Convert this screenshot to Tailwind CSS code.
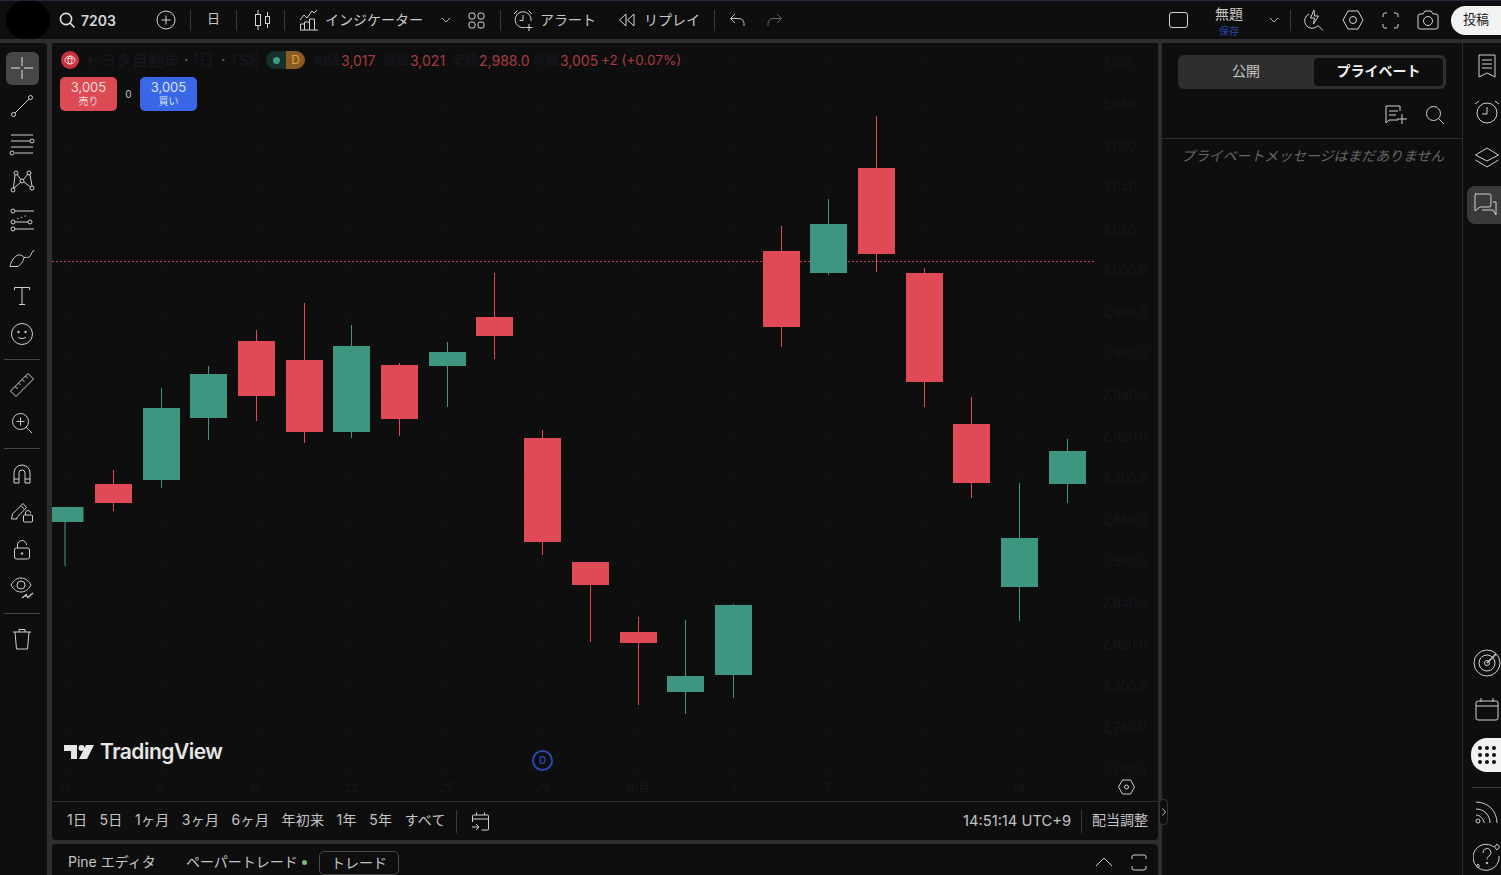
<!DOCTYPE html>
<html lang="ja">
<head>
  <meta charset="UTF-8" />
  <title>TradingView 7203</title>
  <script src="https://cdn.jsdelivr.net/npm/@tailwindcss/browser@4"></script>
</head>
<body class="bg-[#2e2e2e] text-[#d4d4d4] overflow-hidden font-['Inter','Noto_Sans_CJK_JP',sans-serif]">
<div class="w-[1501px] h-[875px] flex flex-col overflow-hidden">

  <!-- Top bar -->
  <header class="h-[39px] shrink-0 bg-[#0e0e0f] border-t border-[#24263a] flex items-center text-[14px] text-[#c9c9c9]">
    <div class="w-[44px] h-[38px] ml-[6px] bg-black rounded-full"></div>
    <svg class="ml-[8px]" width="18" height="18" viewBox="0 0 18 18" fill="none" stroke="#e0e0e0" stroke-width="1.6"><circle cx="8" cy="8" r="5.6"/><path d="M12 12l4.5 4.5"/></svg>
    <span class="ml-[5px] w-[36px] font-semibold text-[#d8d8d8]">7203</span>
    <svg class="ml-[39px]" width="20" height="20" viewBox="0 0 20 20" fill="none" stroke="#d4d4d4"><circle cx="10" cy="10" r="9"/><path d="M10 5.500v9M5.500 10h9"/></svg>
    <div class="ml-[14px] w-px h-[21px] bg-[#3a3a3a]"></div>
    <span class="ml-[16px] w-[13px] text-[13px] pb-[2px]">日</span>
    <div class="ml-[16px] w-px h-[21px] bg-[#3a3a3a]"></div>
    <svg class="ml-[17px]" width="18" height="22" viewBox="0 0 18 22" fill="none" stroke="#d4d4d4"><rect x="1.500" y="5.500" width="5" height="11"/><path d="M4 1v4.500M4 16.500V21"/><rect x="11.500" y="7.500" width="4" height="7"/><path d="M13.500 3v4.500M13.500 14.500V19"/></svg>
    <div class="ml-[12px] w-px h-[21px] bg-[#3a3a3a]"></div>
    <svg class="ml-[14px]" width="20" height="22" viewBox="0 0 20 22" fill="none" stroke="#d4d4d4"><path d="M1 11l4-5 3 3 5-7 2 2 3-3"/><path d="M1.500 21v-6h4v6M5.500 21v-8h5v8M10.500 21v-11h5v11M1 21h18"/></svg>
    <span class="ml-[6px] w-[98px] whitespace-nowrap pb-[2px]">インジケーター</span>
    <svg class="ml-[18px]" width="10" height="6" viewBox="0 0 10 6" fill="none" stroke="#b8b8b8"><path d="M1 1l4 4 4-4"/></svg>
    <svg class="ml-[17px]" width="17" height="17" viewBox="0 0 17 17" fill="none" stroke="#d4d4d4"><rect x="1" y="1" width="6" height="6" rx="2"/><rect x="10" y="1" width="6" height="6" rx="2"/><rect x="1" y="10" width="6" height="6" rx="2"/><rect x="10" y="10" width="6" height="6" rx="2"/></svg>
    <div class="ml-[15px] w-px h-[21px] bg-[#3a3a3a]"></div>
    <svg class="ml-[12px]" width="21" height="22" viewBox="0 0 21 22" fill="none" stroke="#d4d4d4"><path d="M12 18.500A8 8 0 1 1 18 12M1 5l3.500-3.500M19 5l-3.500-3.500M10 6v5.500H6.500M16 15v7M12.500 18.500h7"/></svg>
    <span class="ml-[6px] w-[56px] whitespace-nowrap pb-[2px]">アラート</span>
    <svg class="ml-[22px]" width="18" height="14" viewBox="0 0 18 14" fill="none" stroke="#d4d4d4"><path d="M8 1L1.500 7 8 13zM16 1L9.500 7 16 13z"/></svg>
    <span class="ml-[8px] w-[55px] whitespace-nowrap pb-[2px]">リプレイ</span>
    <div class="ml-[15px] w-px h-[21px] bg-[#3a3a3a]"></div>
    <svg class="ml-[14px]" width="16" height="14" viewBox="0 0 16 14" fill="none" stroke="#c4c4c4"><path d="M6 1L1.500 5.500 6 10M1.500 5.500H10a5 5 0 0 1 5 5V13"/></svg>
    <svg class="ml-[22px]" width="16" height="14" viewBox="0 0 16 14" fill="none" stroke="#666"><path d="M10 1l4.500 4.500L10 10M14.500 5.500H6a5 5 0 0 0-5 5V13"/></svg>

    <div class="ml-auto flex items-center">
      <div class="w-[19px] h-[16px] border border-[#d4d4d4] rounded-[3px]"></div>
      <div class="ml-[27px] w-[28px] flex flex-col items-center leading-none">
        <span class="text-[14px] text-[#c9c9c9] whitespace-nowrap">無題</span>
        <span class="mt-[5px] -mb-[2px] text-[10px] text-[#2a4aa8] whitespace-nowrap">保存</span>
      </div>
      <svg class="ml-[26px]" width="10" height="6" viewBox="0 0 10 6" fill="none" stroke="#b8b8b8"><path d="M1 1l4 4 4-4"/></svg>
      <div class="ml-[11px] w-px h-[21px] bg-[#3a3a3a]"></div>
      <svg class="ml-[13px]" width="20" height="22" viewBox="0 0 20 22" fill="none" stroke="#d4d4d4"><path d="M5 5a7.500 7.500 0 1 0 9 11.500M14 16.500l5 5M10 1L6.500 9h4l-1 6 5-8h-4z"/></svg>
      <svg class="ml-[18px]" width="22" height="22" viewBox="0 0 22 22" fill="none" stroke="#d4d4d4"><path d="M6 2h10l5 9-5 9H6l-5-9z"/><circle cx="11" cy="11" r="3.500"/></svg>
      <svg class="ml-[18px]" width="17" height="17" viewBox="0 0 17 17" fill="none" stroke="#d4d4d4"><path d="M1 5V3a2 2 0 0 1 2-2h2M12 1h2a2 2 0 0 1 2 2v2M16 12v2a2 2 0 0 1-2 2h-2M5 16H3a2 2 0 0 1-2-2v-2"/></svg>
      <svg class="ml-[18px]" width="22" height="20" viewBox="0 0 22 20" fill="none" stroke="#d4d4d4"><path d="M3 4h3l2-3h6l2 3h3a2 2 0 0 1 2 2v11a2 2 0 0 1-2 2H3a2 2 0 0 1-2-2V6a2 2 0 0 1 2-2z"/><circle cx="11" cy="11" r="4.500"/></svg>
      <div class="ml-[12px] w-[50px] h-[29px] bg-[#f2f2f2] rounded-l-[15px] flex items-center pl-[12px] text-[13px] text-[#1a1a1a] whitespace-nowrap">投稿</div>
    </div>
  </header>

  <div class="flex-1 min-h-0 flex mt-[4px]">
    <!-- Left drawing tools -->
    <aside class="w-[47px] shrink-0 bg-[#0e0e0f] rounded-tr-[4px] pt-[6px] flex flex-col items-center text-[#cfcfcf]">
      <div class="w-[33px] h-[38px] flex items-center justify-center -ml-[3px]"><div class="w-[33px] h-[33px] bg-[#474747] rounded-[6px] flex items-center justify-center">
        <svg width="24" height="24" viewBox="0 0 24 24" fill="none" stroke="#e4e4e4"><path d="M12 1v9M12 14v9M1 12h9M14 12h9"/></svg></div></div>
      <div class="w-[38px] h-[38px] flex items-center justify-center -ml-[3px]"><svg width="24" height="24" viewBox="0 0 24 24" fill="none" stroke="currentColor"><circle cx="3.500" cy="20.500" r="2"/><circle cx="20.500" cy="3.500" r="2"/><path d="M5 19L19 5"/></svg></div>
      <div class="w-[38px] h-[38px] flex items-center justify-center -ml-[3px]"><svg width="26" height="24" viewBox="0 0 26 24" fill="none" stroke="currentColor"><path d="M2 3h22M2 9h19M2 15h22M6 21h18"/><circle cx="23" cy="9" r="2"/><circle cx="3" cy="21" r="2"/></svg></div>
      <div class="w-[38px] h-[38px] flex items-center justify-center -ml-[3px]"><svg width="26" height="26" viewBox="0 0 26 26" fill="none" stroke="currentColor"><circle cx="7" cy="4" r="2"/><circle cx="20" cy="4" r="2"/><circle cx="4" cy="21" r="2"/><circle cx="23" cy="19" r="2"/><circle cx="13" cy="12" r="2"/><path d="M6 6L4.500 19M21 6l2 11M8 5l4 6M19 5l-5 6M5 19l7-6M21.500 18L15 13"/></svg></div>
      <div class="w-[38px] h-[38px] flex items-center justify-center -ml-[3px]"><svg width="26" height="24" viewBox="0 0 26 24" fill="none" stroke="currentColor"><path d="M6 3h19M6 14h13M6 21h19"/><circle cx="4" cy="3" r="2"/><circle cx="4" cy="14" r="2"/><circle cx="21" cy="14" r="2"/><circle cx="4" cy="21" r="2"/><path d="M8 11l11-4" stroke-dasharray="1.500 2.500"/></svg></div>
      <div class="w-[38px] h-[38px] flex items-center justify-center -ml-[3px]"><svg width="26" height="24" viewBox="0 0 26 24" fill="none" stroke="currentColor"><path d="M1 20.500c1-5 4-10 8-11.500 2-.5 5 .5 6 2.500-.5 4-4 8.500-7 9zM15 11.500c2-.5 3 .5 5-.5 2-1 2-4 5-7"/></svg></div>
      <div class="w-[38px] h-[38px] flex items-center justify-center -ml-[3px]"><svg width="18" height="20" viewBox="0 0 18 20" fill="none" stroke="currentColor"><path d="M1.500 4V1.500h15V4M9 1.500v17M6 18.500h6"/></svg></div>
      <div class="w-[38px] h-[38px] flex items-center justify-center -ml-[3px]"><svg width="24" height="24" viewBox="0 0 24 24" fill="none" stroke="currentColor"><circle cx="12" cy="12" r="10.500"/><circle cx="8.500" cy="10" r=".8" fill="currentColor"/><circle cx="15.500" cy="10" r=".8" fill="currentColor"/><path d="M8 15c2 2 6 2 8 0"/></svg></div>
      <div class="h-[13px] flex items-center -ml-[3px]"><div class="w-[36px] h-px bg-[#444]"></div></div>
      <div class="w-[38px] h-[38px] flex items-center justify-center -ml-[3px]"><svg width="26" height="26" viewBox="0 0 26 26" fill="none" stroke="currentColor"><path d="M1.500 19L19 1.500l5.500 5.500L7 24.500zM6 14.500l2.500 2.500M9.500 11l2 2M13 7.500l2.500 2.500M16.500 4l2 2"/></svg></div>
      <div class="w-[38px] h-[38px] flex items-center justify-center -ml-[3px]"><svg width="22" height="22" viewBox="0 0 22 22" fill="none" stroke="currentColor"><circle cx="9.500" cy="9.500" r="8"/><path d="M15 15l6 6M9.500 5.500v8M5.500 9.500h8"/></svg></div>
      <div class="h-[13px] flex items-center -ml-[3px]"><div class="w-[36px] h-px bg-[#444]"></div></div>
      <div class="w-[38px] h-[38px] flex items-center justify-center -ml-[3px]"><svg width="18" height="20" viewBox="0 0 18 20" fill="none" stroke="currentColor"><path d="M1 19V9a8 8 0 0 1 16 0v10h-5V9a3 3 0 0 0-6 0v10zM1 15h5M12 15h5"/></svg></div>
      <div class="w-[38px] h-[38px] flex items-center justify-center -ml-[3px]"><svg width="24" height="24" viewBox="0 0 24 24" fill="none" stroke="currentColor"><path d="M1.500 19l1-5L13 3.500l3.500 4L7 17.500v1.500zM11 5.500l3.500 4"/><rect x="13.500" y="15" width="9" height="7" rx="1"/><path d="M15.500 15v-2a2.500 2.500 0 0 1 5 0"/></svg></div>
      <div class="w-[38px] h-[38px] flex items-center justify-center -ml-[3px]"><svg width="18" height="20" viewBox="0 0 18 20" fill="none" stroke="currentColor"><rect x="1.500" y="8" width="15" height="11" rx="2"/><path d="M4.500 8V5a4.500 4.500 0 0 1 9 0"/><circle cx="9" cy="13.500" r=".8" fill="currentColor"/></svg></div>
      <div class="w-[38px] h-[38px] flex items-center justify-center -ml-[3px]"><svg width="24" height="24" viewBox="0 0 24 24" fill="none" stroke="currentColor"><path d="M1 9c3-5 6-7 10-7s7 2 10 7c-3 5-6 7-10 7S4 14 1 9z"/><circle cx="11" cy="9" r="4"/><path d="M12 22l5-4M17 22l6-5M15 19l3 2" stroke-width="1.300"/></svg></div>
      <div class="h-[13px] flex items-center -ml-[3px]"><div class="w-[36px] h-px bg-[#444]"></div></div>
      <div class="w-[38px] h-[38px] flex items-center justify-center -ml-[3px]"><svg width="20" height="22" viewBox="0 0 20 22" fill="none" stroke="currentColor"><path d="M1 4h18M7 4V1.500h6V4M3 4l1.500 17h11L17 4"/></svg></div>
    </aside>

    <!-- Chart column -->
    <main class="w-[1106px] ml-[5px] shrink-0 flex flex-col">
      <div class="h-[797px] bg-[#0e0e0f] rounded-b-[4px] flex flex-col">
        <div id="chart" class="relative h-[759px] border-b border-[#2e2e2e] overflow-hidden">
          <svg id="candles" class="absolute inset-0" width="1106" height="758" viewBox="52 43 1106 758"></svg>

          <!-- Legend -->
          <div class="absolute left-[9px] top-[8px] h-[18px] flex items-center text-[14px] whitespace-nowrap">
            <div class="w-[18px] h-[18px] rounded-full bg-[#c8333c] flex items-center justify-center">
              <svg width="12" height="10" viewBox="0 0 12 10" fill="none" stroke="#f5d5d5"><ellipse cx="6" cy="5" rx="5" ry="4"/><ellipse cx="6" cy="5" rx="2" ry="4"/><path d="M2.500 3.500h7"/></svg>
            </div>
            <div class="ml-[5px] w-[182px] flex items-center text-[#17181f] text-[16px]">
              <span>トヨタ自動車</span><span class="ml-[4px] w-[5px] text-[#666]">·</span><span class="ml-[3px] w-[29px]">1日</span><span class="w-[5px] text-[#666]">·</span><span class="ml-[3px]">TSE</span>
            </div>
            <div class="w-[39px] h-[18px] rounded-full overflow-hidden flex text-[12px]">
              <div class="w-[20px] bg-[#16302c] flex items-center justify-center"><div class="w-[7px] h-[7px] rounded-full bg-[#3f9a82]"></div></div>
              <div class="w-[19px] bg-[#8a5b22] text-[#e0a040] flex items-center justify-center">D</div>
            </div>
            <span class="ml-[9px] w-[27px] text-[#17181f] text-[13px]">始値</span>
            <span class="w-[42px] text-[#a93a40]">3,017</span><span class="w-[27px] text-[#17181f] text-[13px]">高値</span>
            <span class="w-[42px] text-[#a93a40]">3,021</span><span class="w-[27px] text-[#17181f] text-[13px]">安値</span>
            <span class="w-[54px] text-[#a93a40]">2,988.0</span><span class="w-[27px] text-[#17181f] text-[13px]">終値</span>
            <span class="w-[41px] text-[#a93a40]">3,005</span>
            <span class="text-[#a93a40] text-[13.500px]">+2 (+0.07%)</span>
          </div>

          <!-- Sell / buy -->
          <div class="absolute left-[8px] top-[34px] flex items-center">
            <div class="w-[57px] h-[34px] bg-[#dc4a54] rounded-[5px] flex flex-col items-center justify-center leading-none text-[#f4dcdc] pb-[2px]">
              <span class="text-[13px]">3,005</span><span class="mt-[2px] text-[10px]">売り</span>
            </div>
            <span class="w-[23px] text-center text-[10px] text-[#c4c4c4]">0</span>
            <div class="w-[57px] h-[34px] bg-[#3a66e8] rounded-[5px] flex flex-col items-center justify-center leading-none text-[#dbe4fb] pb-[2px]">
              <span class="text-[13px]">3,005</span><span class="mt-[2px] text-[10px]">買い</span>
            </div>
          </div>

          <!-- Logo -->
          <div class="absolute left-[12px] top-[698px] flex items-center text-[#e6e6e6]">
            <svg width="30" height="16" viewBox="0 0 30 16" fill="#e6e6e6"><path d="M0 1h13v14H7V7H0z"/><circle cx="17.500" cy="4" r="3"/><path d="M22 1h8l-7 14h-8z"/></svg>
            <span class="ml-[6px] text-[21px] font-semibold tracking-[-0.5px] leading-none">TradingView</span>
          </div>

          <!-- Dividend marker -->
          <div class="absolute left-[480px] top-[707px] w-[21px] h-[21px] rounded-full border-2 border-[#2a48b0] flex items-center justify-center text-[10px] font-semibold text-[#2a48b0]">D</div>

          <!-- Scale settings -->
          <svg class="absolute left-[1066px] top-[736px]" width="17" height="16" viewBox="0 0 17 16" fill="none" stroke="#d0d0d0"><path d="M4.500 1h8l4 7-4 7h-8l-4-7z"/><circle cx="8.500" cy="8" r="2"/></svg>
        </div>

        <!-- Range bar -->
        <div class="flex-1 flex items-center pl-[15px] pr-[10px] text-[14px] text-[#c4c4c4]">
          <div class="flex items-center gap-[12.250px] tracking-[0.3px] whitespace-nowrap pb-[3px]">
            <span>1日</span><span>5日</span><span>1ヶ月</span><span>3ヶ月</span><span>6ヶ月</span><span>年初来</span><span>1年</span><span>5年</span><span>すべて</span>
          </div>
          <div class="ml-[10px] w-px h-[23px] bg-[#3a3a3a]"></div>
          <svg class="ml-[14px]" width="19" height="20" viewBox="0 0 19 20" fill="none" stroke="#d0d0d0"><path d="M1.500 11V5a1 1 0 0 1 1-1h14a1 1 0 0 1 1 1v13a1 1 0 0 1-1 1h-6M1.500 8h16M5.500 1.500V4M13.500 1.500V4M1 16h7M5 13l3 3-3 3"/></svg>
          <span class="ml-auto text-[14.700px] whitespace-nowrap">14:51:14 UTC+9</span>
          <div class="ml-[10px] w-px h-[23px] bg-[#3a3a3a]"></div>
          <span class="ml-[10px] whitespace-nowrap pb-[3px]">配当調整</span>
        </div>
      </div>

      <!-- Bottom panel -->
      <div class="mt-[4px] flex-1 bg-[#0e0e0f] rounded-t-[4px] flex items-start text-[14px] text-[#c4c4c4] whitespace-nowrap relative">
        <span class="ml-[16px] mt-[7px] w-[85px]">Pine エディタ</span>
        <span class="ml-[33px] mt-[7px] w-[110px]">ペーパートレード</span>
        <div class="ml-[6px] mt-[16px] w-[5px] h-[5px] rounded-full bg-[#7fb77e]"></div>
        <div class="ml-[12px] mt-[7px] w-[80px] h-[24px] border border-[#4a4a4a] rounded-[5px] flex items-center justify-center pb-[2px]">トレード</div>
        <svg class="ml-auto mt-[13px]" width="18" height="10" viewBox="0 0 18 10" fill="none" stroke="#d0d0d0"><path d="M1 9l8-8 8 8"/></svg>
        <svg class="ml-[18px] mr-[11px] mt-[10px]" width="16" height="17" viewBox="0 0 16 17" fill="none" stroke="#d0d0d0"><path d="M1 5V3a2 2 0 0 1 2-2h10a2 2 0 0 1 2 2v2M15 12v2a2 2 0 0 1-2 2H3a2 2 0 0 1-2-2v-2"/></svg>
      </div>
    </main>

    <!-- Chat panel -->
    <section class="w-[300px] ml-[4px] shrink-0 bg-[#0e0e0f] relative">
      <div class="absolute -left-[3px] top-[756px] w-[9px] h-[26px] rounded-[4px] bg-[#0e0e0f] border border-[#333] flex items-center justify-center">
        <svg width="4" height="8" viewBox="0 0 4 8" fill="none" stroke="#c0c0c0"><path d="M.5 .5L3.500 4 .5 7.500"/></svg>
      </div>
      <div class="mx-[16px] mt-[12px] w-[268px] h-[34px] bg-[#2e2e2e] rounded-[6px] flex items-center text-[14px]">
        <span class="w-[136px] text-center text-[#c4c4c4] whitespace-nowrap pb-[4px]">公開</span>
        <div class="w-[129px] h-[28px] bg-[#0e0e0f] rounded-[4px] flex items-center justify-center font-bold text-[#f0f0f0] whitespace-nowrap pb-[3px]">プライベート</div>
      </div>
      <div class="h-[50px] flex items-center justify-end pr-[17px] pt-[2px] border-b border-[#2e2e2e]">
        <svg width="22" height="20" viewBox="0 0 22 20" fill="none" stroke="#d0d0d0"><path d="M15 1H1v17l3-3h9M4 6h9M4 10h7M17 9v10M12 14h10M15 1v5"/></svg>
        <svg class="ml-[18px]" width="20" height="20" viewBox="0 0 20 20" fill="none" stroke="#d0d0d0"><circle cx="8.500" cy="8.500" r="7"/><path d="M13.500 13.500L19 19"/></svg>
      </div>
      <p class="pl-[19px] pt-[7px] text-[13.900px] italic text-[#666] whitespace-nowrap">プライベートメッセージはまだありません</p>
    </section>

    <!-- Right tools -->
    <aside class="flex-1 bg-[#0e0e0f] border-l border-[#2a2a2a] flex flex-col items-center text-[#d0d0d0]">
      <div class="h-[46px] flex items-center pl-[8px] w-full justify-center"><svg width="20" height="26" viewBox="0 0 20 26" fill="none" stroke="currentColor"><path d="M2 2h16v22l-8-4-8 4zM5 7h10M5 11h10M5 15h10"/></svg></div>
      <div class="h-[46px] flex items-center pl-[8px] w-full justify-center"><svg width="26" height="26" viewBox="0 0 26 26" fill="none" stroke="currentColor"><circle cx="13" cy="14" r="10"/><path d="M1 5l4-3M25 5l-4-3M13 8v7H8"/></svg></div>
      <div class="h-[46px] flex items-center pl-[8px] w-full justify-center"><svg width="26" height="22" viewBox="0 0 26 22" fill="none" stroke="currentColor"><path d="M13 1l11.500 7L13 14 1.500 8zM1.500 13L13 20l11.500-7"/></svg></div>
      <div class="ml-[4px] mt-[5px] w-[35px] h-[38px] bg-[#3a3a3a] rounded-l-[8px] flex items-center justify-center self-start">
        <svg width="24" height="24" viewBox="0 0 24 24" fill="none" stroke="currentColor"><path d="M2 1h15a2 2 0 0 1 1 2v9a2 2 0 0 1-2 2H7l-5 4V3a2 2 0 0 1 1-2zM9 17h11l3 5V9h-3"/></svg>
      </div>
      <div class="mt-auto h-[46px] flex items-center pl-[8px] w-full justify-center"><svg width="28" height="28" viewBox="0 0 28 28" fill="none" stroke="currentColor"><circle cx="14" cy="14" r="13"/><circle cx="14" cy="14" r="8"/><circle cx="14" cy="14" r="2.500"/><path d="M14 14l9-9" stroke-width="1.400"/></svg></div>
      <div class="h-[46px] flex items-center pl-[8px] w-full justify-center"><svg width="24" height="24" viewBox="0 0 24 24" fill="none" stroke="currentColor"><rect x="1" y="4" width="22" height="19" rx="2"/><path d="M1 9h22M6 1v4M18 1v4"/></svg></div>
      <div class="h-[46px] flex items-center justify-end w-full"><div class="w-[31px] h-[34px] bg-[#f2f2f2] rounded-l-[16px] grid grid-cols-[4px_4px_4px] gap-[3px] content-center justify-start pl-[7px]">
        <i class="w-[4px] h-[4px] bg-[#111] rounded-full"></i><i class="w-[4px] h-[4px] bg-[#111] rounded-full"></i><i class="w-[4px] h-[4px] bg-[#111] rounded-full"></i>
        <i class="w-[4px] h-[4px] bg-[#111] rounded-full"></i><i class="w-[4px] h-[4px] bg-[#111] rounded-full"></i><i class="w-[4px] h-[4px] bg-[#111] rounded-full"></i>
        <i class="w-[4px] h-[4px] bg-[#111] rounded-full"></i><i class="w-[4px] h-[4px] bg-[#111] rounded-full"></i><i class="w-[4px] h-[4px] bg-[#111] rounded-full"></i>
      </div></div>
      <div class="h-[10px] w-full flex items-end justify-end"><div class="w-[30px] h-px bg-[#3a3a3a]"></div></div>
      <div class="h-[48px] flex items-center pl-[8px] w-full justify-center"><svg width="24" height="24" viewBox="0 0 24 24" fill="none" stroke="currentColor"><path d="M1 2c12 0 21 9 21 21M1 9c8 0 14 6 14 14M1 15c4 0 8 4 8 8"/><circle cx="3" cy="21" r="2"/></svg></div>
      <div class="h-[39px] pt-[3px] flex items-center pl-[8px] w-full justify-center"><svg width="28" height="30" viewBox="0 0 28 30" fill="none" stroke="currentColor"><path d="M21 5a13 13 0 1 0 5 9"/><path d="M10 11a4 4 0 1 1 6 3c-1.500 1-2 2-2 3.500"/><circle cx="14" cy="21" r=".8" fill="currentColor"/><path d="M24 2l2.500 3-2.500 3-2.500-3zM5 22l1.500 2-1.500 2-1.500-2z"/></svg></div>
    </aside>
  </div>
</div>

<script>
  // [center x, body top, body bottom, wick top, wick bottom, up?]
  const candles = [
    [65,507,522,507,566,1],[113.5,484,503,470,511,0],[161.5,408,480,388,488,1],[208.5,374,418,366,440,1],
    [256.5,341,396,330,421,0],[304.5,360,432,303,443,0],[351.5,346,432,325,438,1],[399.5,365,419,363,436,0],
    [447.5,352,366,342,407,1],[494.5,317,336,273,359,0],[542.5,438,542,430,555,0],[590.5,562,585,562,642,0],
    [638.5,632,643,617,705,0],[685.5,676,692,620,714,1],[733.5,605,675,604,698,1],[781.5,251,327,226,347,0],
    [828.5,224,273,199,275,1],[876.5,168,254,116,272,0],[924.5,273,382,268,407,0],[971.5,424,483,397,498,0],
    [1019.5,538,587,483,621,1],[1067.5,451,484,439,503,1]
  ];
  const prices = ["3,100","3,080","3,060","3,040","3,020","3,000.0","2,980.0","2,960.0","2,940.0","2,920.0","2,900.0","2,880.0","2,860.0","2,840.0","2,820.0","2,800.0","2,780.0","2,760.0"];
  const times = [[64,"11"],[161,"16"],[256,"18"],[351,"22"],[446,"25"],[542,"29"],[638,"10月"],[733,"3"],[828,"7"],[924,"9"],[1019,"14"]];
  let s = "";
  prices.forEach((p, i) => {
    const y = 63 + i * 41.55;
    s += `<path d="M52 ${y.toFixed(0)}.5H1094" stroke="#111113"/>`;
    s += `<text x="1102" y="${(y + 4.5).toFixed(0)}" font-size="12.5" fill="#16171d" font-family="Inter">${p}</text>`;
  });
  times.forEach(([x, t]) => {
    s += `<path d="M${x}.5 43V775" stroke="#111113"/>`;
    s += `<text x="${x}" y="792" text-anchor="middle" font-size="12" fill="#16171d" font-family="Inter, Noto Sans CJK JP">${t}</text>`;
  });
  s += `<path d="M52 261.500H1094" stroke="#c0444a" stroke-dasharray="2 2"/>`;
  candles.forEach(([x, t, b, wt, wb, up]) => {
    const col = up ? "#3e9680" : "#e04a54";
    s += `<rect x="${x - 0.5}" y="${wt}" width="1" height="${wb - wt}" fill="${col}"/>`;
    const left = Math.max(52, x - 18.5);
    s += `<rect x="${left}" y="${t}" width="${x + 18.5 - left}" height="${b - t}" fill="${col}"/>`;
  });
  document.getElementById("candles").innerHTML = s;
</script>
</body>
</html>
